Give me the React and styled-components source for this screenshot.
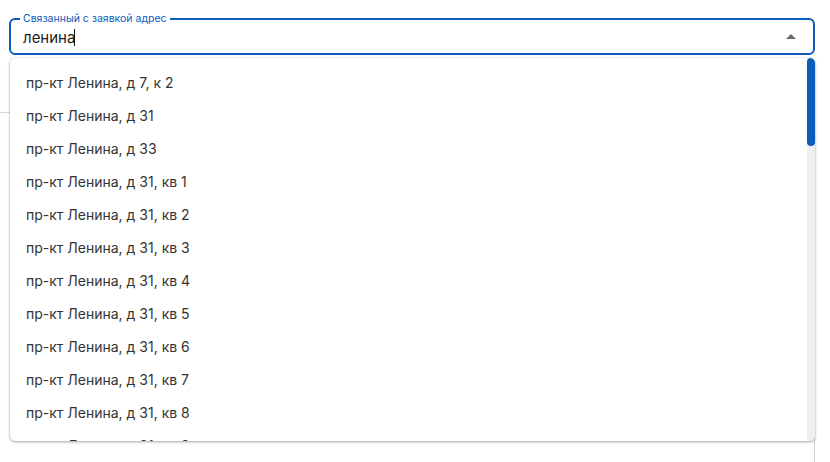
import React from "react";
import styled, { createGlobalStyle } from "styled-components";

const GlobalStyle = createGlobalStyle`
  html, body {
    margin: 0;
    padding: 0;
    background: #ffffff;
    font-family: Inter, "Noto Sans", sans-serif;
  }
`;

const options = [
  "пр-кт Ленина, д 7, к 2",
  "пр-кт Ленина, д 31",
  "пр-кт Ленина, д 33",
  "пр-кт Ленина, д 31, кв 1",
  "пр-кт Ленина, д 31, кв 2",
  "пр-кт Ленина, д 31, кв 3",
  "пр-кт Ленина, д 31, кв 4",
  "пр-кт Ленина, д 31, кв 5",
  "пр-кт Ленина, д 31, кв 6",
  "пр-кт Ленина, д 31, кв 7",
  "пр-кт Ленина, д 31, кв 8",
  "пр-кт Ленина, д 31, кв 9",
];

export default function App() {
  return (
    <Page>
      <GlobalStyle />
      <Field>
        <Outline>
          <Legend>Связанный с заявкой адрес</Legend>
        </Outline>
        <InputRow>
          <Input defaultValue="ленина" />
          <Caret />
          <Arrow viewBox="0 0 24 24">
            <path d="M7 14l5-5 5 5z" />
          </Arrow>
        </InputRow>
        <Popup>
          <List>
            {options.map((o) => (
              <Option key={o}>{o}</Option>
            ))}
          </List>
          <Track>
            <Thumb />
          </Track>
        </Popup>
      </Field>
      <Panel />
    </Page>
  );
}

const Page = styled.div`
  position: relative;
  width: 830px;
  height: 462px;
  overflow: hidden;
  padding: 19px 15px 0 9px;
  box-sizing: border-box;
`;

const Field = styled.div`
  position: relative;
  height: 36px;
  z-index: 2;
`;

const Outline = styled.fieldset`
  position: absolute;
  inset: -6px 0 0 0;
  margin: 0;
  padding: 0 9px;
  border: 2px solid #0b5cbd;
  border-radius: 6px;
  pointer-events: none;
`;

const Legend = styled.legend`
  padding: 0 3px;
  font-size: 10.5px;
  line-height: 12px;
  color: #0b5cbd;
  font-family: Inter, sans-serif;
`;

const InputRow = styled.div`
  display: flex;
  align-items: center;
  height: 36px;
  padding: 0 12px 0 14px;
`;

const Input = styled.input`
  border: none;
  outline: none;
  background: transparent;
  font-family: Inter, sans-serif;
  font-size: 15px;
  color: #1c1c1c;
  width: 51px;
  padding: 0;
`;

const Caret = styled.span`
  width: 1px;
  height: 17px;
  background: #111;
  margin-right: auto;
`;

const Arrow = styled.svg`
  width: 24px;
  height: 24px;
  fill: #6b6b6b;
`;

const Popup = styled.div`
  position: absolute;
  top: 39px;
  left: 1px;
  right: 0;
  height: 383px;
  display: flex;
  background: #fff;
  border-radius: 5px;
  box-shadow: 0 1px 3px rgba(0, 0, 0, 0.35), 0 0 1px rgba(0, 0, 0, 0.2);
  overflow: hidden;
`;

const List = styled.ul`
  flex: 1;
  list-style: none;
  margin: 0;
  padding: 8px 0;
`;

const Option = styled.li`
  height: 33px;
  display: flex;
  align-items: center;
  padding: 0 16px;
  font-family: Inter, sans-serif;
  font-size: 14px;
  color: #333;
`;

const Track = styled.div`
  width: 8px;
  background: #efefef;
  border-radius: 0 5px 5px 0;
`;

const Thumb = styled.div`
  height: 88px;
  background: #0b5cbd;
  border-radius: 4px;
`;

const Panel = styled.div`
  margin-top: 57px;
  margin-left: -9px;
  height: 400px;
  border-top: 1px solid #d6d6d6;
  border-right: 1px solid #cfcfcf;
`;
